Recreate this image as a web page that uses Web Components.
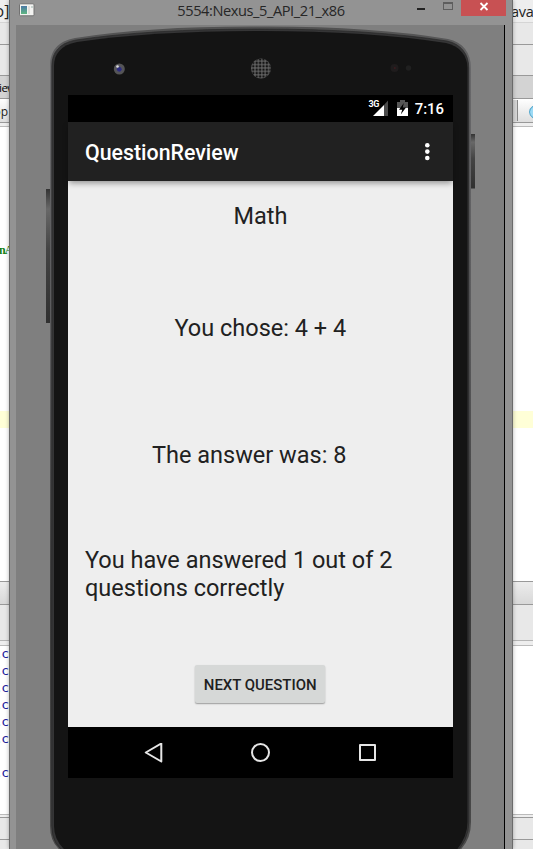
<!DOCTYPE html>
<html lang="en">
<head>
<meta charset="utf-8">
<title>5554:Nexus_5_API_21_x86</title>
<style>
html,body{margin:0;height:849px;overflow:hidden}
body{position:relative;font-family:Roboto,"Liberation Sans",sans-serif;background:#fff}
</style>
</head>
<body>
<desktop-scene></desktop-scene>
<script>
const define = (name, html) => customElements.define(name, class extends HTMLElement {
  constructor() {
    super();
    this.attachShadow({mode: 'open'}).innerHTML = html;
  }
});

define('ide-strip', `
<style>
:host{display:flex;justify-content:flex-start;align-items:center;box-sizing:border-box;flex:none;overflow:hidden;white-space:pre;
 width:533px;height:var(--h);background:var(--bg,#fff);border-bottom:var(--line,0 solid #999);color:#222;font:var(--f,16px "Open Sans",sans-serif)}
.l{width:10px;flex:none;display:flex}
.r{margin-left:503px;width:20px;flex:none;display:flex}
</style>
<div class="l"><slot></slot></div><div class="r"><slot name="right"></slot></div>`);

define('ide-backdrop', `
<style>
:host{display:flex;flex-direction:column;width:533px;height:849px;overflow:hidden}
.code span{color:#128012;margin:-2px 0 0 -1px;font:bold 12px/17px "Liberation Serif",serif;letter-spacing:-.8px}
.log{--h:17px;--f:13px/14px "DejaVu Sans Mono","Liberation Mono",monospace}
.log span{color:#20209a;margin:-2px 0 0 -5px;letter-spacing:-1.500px}
.stub{display:block;flex:none;width:4px;height:21px;background:#d6d6d6;border-right:1px solid #888}
.disc{display:block;flex:none;width:20px;height:14px;border-radius:50%;background:#9cdaf5;border:1px solid #54a7cc;margin:4px 0 0 11px}
</style>
<ide-strip style="--h:23px;--bg:#eee;--line:1px solid #d5d5d5"><span style="margin-left:-5.500px">o]</span><span slot="right" style="font-size:14.5px;margin-left:-2px;letter-spacing:-.3px">ava</span></ide-strip>
<ide-strip style="--h:22px;--bg:#e8e8e8;--line:1px solid #999"></ide-strip>
<ide-strip style="--h:31px;--bg:#e8e8e8;--line:1px solid #999"></ide-strip>
<ide-strip style="--h:23px;--bg:#d3d3d3;--line:1px solid #999;--f:11.5px 'Open Sans',sans-serif"><span style="color:#000;margin-left:-1px;letter-spacing:-.5px">iew</span></ide-strip>
<ide-strip style="--h:24px;--bg:linear-gradient(#fff,#dedede);--line:1px solid #999;--f:12px 'Open Sans',sans-serif"><span style="margin:1px 0 0 -6.500px">op</span><i slot="right" class="stub"></i><i slot="right" class="disc"></i></ide-strip>
<ide-strip style="--h:4px;--bg:#eee;--line:1px solid #bbb"></ide-strip>
<ide-strip style="--h:115px"></ide-strip>
<ide-strip class="code" style="--h:18px"><span>nA</span></ide-strip>
<ide-strip style="--h:151px"></ide-strip>
<ide-strip style="--h:17px;--bg:#ffffd7"></ide-strip>
<ide-strip style="--h:154px;--line:1px solid #999"></ide-strip>
<ide-strip style="--h:23px;--bg:linear-gradient(#ececec,#d8d8d8);--line:1px solid #999"></ide-strip>
<ide-strip style="--h:36px;--bg:#e8e8e8;--line:1px solid #b5b5b5"></ide-strip>
<ide-strip style="--h:5px;--bg:#eee;--line:1px solid #bbb"></ide-strip>
<ide-strip class="log"><span>.c</span></ide-strip>
<ide-strip class="log"><span>.c</span></ide-strip>
<ide-strip class="log"><span>.c</span></ide-strip>
<ide-strip class="log"><span>.c</span></ide-strip>
<ide-strip class="log"><span>.c</span></ide-strip>
<ide-strip class="log"><span>.c</span></ide-strip>
<ide-strip class="log"></ide-strip>
<ide-strip class="log"><span>.c</span></ide-strip>
<ide-strip style="--h:33px;--line:1px solid #bbb"></ide-strip>
<ide-strip style="--h:3px;--bg:#eee;--line:1px solid #999"></ide-strip>
<ide-strip style="--h:22px;--bg:#e8e8e8;--line:1px solid #999"></ide-strip>
<ide-strip style="--h:10px;--bg:#e8e8e8"></ide-strip>`);

define('title-bar', `
<style>
:host{display:flex;height:25px;background:#939393;align-items:flex-start}
.ico{width:16px;height:14px;margin:3px 0 0 9px}
.t{flex:1;text-align:center;font:14.6px/20px "Open Sans",sans-serif;letter-spacing:-.42px;color:#262626;white-space:nowrap;padding-left:89px}
svg{display:block;flex:none}
.close{width:45px;height:16px;background:#c85153;margin-right:6px}
</style>
<svg class="ico" viewBox="0 0 16 14"><defs><linearGradient id="g" x2="0" y2="1"><stop stop-color="#4a78a6"/><stop offset="1" stop-color="#5fb681"/></linearGradient></defs><rect x=".5" y=".8" width="14.5" height="12" rx="1" fill="#f3f3f1" stroke="#727272"/><path d="M2 3h6v8H2z" fill="url(#g)"/><path d="M9 3h2v8H9z" fill="#dededb"/><path d="M12 3h2v2h-2z" fill="#c7d3cf"/></svg>
<div class="t"><slot></slot></div>
<svg width="45" height="20" style="margin:0 3px 0 15px"><path d="M4 9h8" stroke="#222" stroke-width="2"/><rect x="30.500" y="3" width="9" height="6.500" fill="none" stroke="#5e5e5e"/><path d="M30 3h10" stroke="#5e5e5e" stroke-width="2"/></svg>
<svg class="close" viewBox="0 0 45 16"><path d="M19.500 3l7 7M26.500 3l-7 7" stroke="#fff" stroke-width="1.800"/></svg>`);

define('status-bar', `
<style>
:host{display:flex;height:27px;background:#000;color:#fff;justify-content:flex-end;align-items:center;box-sizing:border-box;padding-right:9px;font:500 14.9px/27px Roboto,sans-serif}
.c{padding-top:2px}
svg{display:block}
.g{font:bold 9px/8px Roboto,sans-serif;align-self:flex-start;padding-top:5px;letter-spacing:-.6px}
</style>
<span class="g">3G</span>
<svg width="15" height="27" style="margin-left:-6px"><path d="M11 10L15 5.500V21h-4z" fill="#4b4b4b"/><path d="M0 21L11 10v11z" fill="#fff"/></svg>
<svg width="11" height="27" style="margin:0 7px 0 9px"><path d="M3 5h5v2h3v14H0V7h3z" fill="#555"/><path d="M0 13h11v8H0z" fill="#fff"/><path d="M6.800 8L2 14.700h3.200L3.800 19.500 9 12.500H5.800z" fill="#000"/></svg>
<span class="c">7:16</span>`);

define('app-bar', `
<style>
:host{display:flex;height:59px;background:#212121;color:#fff;justify-content:space-between;align-items:center;box-sizing:border-box;padding:0 23px 0 17px;font:500 21.35px/30px Roboto,sans-serif;position:relative;z-index:1;box-shadow:0 3px 6px -1px rgba(0,0,0,.4)}
svg{display:block}span{padding-top:3px}
</style>
<span><slot></slot></span>
<svg width="6" height="20" fill="#fff"><circle cx="3.300" cy="3.200" r="2.300"/><circle cx="3.300" cy="9.600" r="2.300"/><circle cx="3.300" cy="16" r="2.300"/></svg>`);

define('material-button', `
<style>
:host{display:block}
button{display:block;width:130px;height:38px;border:0;padding:2px 0 0;border-radius:2px;background:#d6d8d7;color:#202020;font:500 14.95px/36px Roboto,sans-serif;white-space:nowrap;box-shadow:0 1px 1.500px rgba(0,0,0,.35)}
</style><button><slot></slot></button>`);

define('review-content', `
<style>
:host{display:flex;flex-direction:column;height:546px;box-sizing:border-box;background:#eee;color:#212121;padding:22px 17px 0;font:23.5px/27.5px Roboto,sans-serif;white-space:nowrap;overflow:hidden}
p{margin:0}
</style>
<p style="padding-left:148.500px">Math</p>
<p style="padding-left:89.500px;margin-top:84.500px">You chose: 4 + 4</p>
<p style="padding-left:67px;margin-top:99px">The answer was: 8</p>
<p style="margin-top:76.500px;line-height:28px">You have answered 1 out of 2<br>questions correctly</p>
<material-button style="margin:63px 0 0 110.200px">NEXT QUESTION</material-button>`);

define('nav-bar', `
<style>:host{display:flex;height:51px;background:#000;align-items:center;justify-content:space-between;padding:0 76px}svg{display:block;fill:none;stroke:#e6e6e6;stroke-width:2;stroke-linejoin:round}</style>
<svg width="19" height="20"><path d="M17.300 .5L1.800 9.500l15.500 9z"/></svg>
<svg width="20" height="20"><circle cx="9.500" cy="9.500" r="8.500"/></svg>
<svg width="19" height="20"><rect x="2" y="2" width="15" height="15"/></svg>`);

define('phone-shell', `
<style>
:host{display:block;position:relative;width:488px;height:824px;background:#7f7f7f;overflow:hidden}
.body{position:absolute;inset:0;display:block}
.screen{position:relative;display:flex;flex-direction:column;width:385px;margin:70px 0 0 52px}
</style>
<svg class="body" width="488" height="824" viewBox="16 25 488 824">
<defs>
<linearGradient id="key" x2="0" y2="1"><stop stop-color="#333"/><stop offset=".15" stop-color="#686868"/><stop offset=".45" stop-color="#444"/><stop offset="1" stop-color="#303030"/></linearGradient>
<linearGradient id="rim" x2="0" y2="1"><stop stop-color="#505050"/><stop offset=".05" stop-color="#68686a"/><stop offset=".35" stop-color="#5c5c5e"/><stop offset=".7" stop-color="#3c3c3c"/><stop offset="1" stop-color="#4a4a4a"/></linearGradient>
<pattern id="mesh" width="3.400" height="3.400" patternUnits="userSpaceOnUse"><circle cx="1.700" cy="1.700" r="1.250" fill="#151515"/></pattern>
</defs>
<rect x="46" y="189" width="5" height="134" fill="url(#key)"/>
<rect x="470" y="134" width="5" height="54.500" fill="url(#key)"/>
<path d="M50 66C50 51 58 41 75 38Q150 26 260 26.500Q370 26 448 39C463 42 471 53 471 68V822Q471 842 456 854H66Q50 846 50 826Z" fill="url(#rim)"/>
<path d="M51.800 66C51.800 52 60 43 76 40Q150 29 260 29Q370 29 447 41C461 44 468.800 54 468.800 68V822Q468.800 841 454 854H68Q51.800 846 51.800 826Z" fill="#353536" stroke="#242424" stroke-width=".6"/>
<path d="M54 66C54 54 61 45 77 42Q150 31 260 31Q370 31 446 43C460 46 467.500 56 467.500 68V822Q467.500 839 453 854H70Q54 843 54 826Z" fill="#141414"/>
<circle cx="119.300" cy="69" r="5.500" fill="#555"/><circle cx="118.800" cy="68.800" r="4" fill="#55555c"/><circle cx="119.300" cy="69.300" r="2.400" fill="#2c2c80"/><circle cx="117.500" cy="66.500" r="1.300" fill="#ddd"/>
<circle cx="261" cy="68.500" r="10" fill="#606060"/><circle cx="261" cy="68.500" r="10" fill="url(#mesh)"/>
<circle cx="394.500" cy="68" r="4" fill="#1f1c1d"/><circle cx="394.800" cy="68" r="1" fill="#3a1c1f"/><circle cx="408.500" cy="68" r="2.700" fill="#202020"/>
</svg>
<div class="screen"><status-bar></status-bar><app-bar>QuestionReview</app-bar><review-content></review-content><nav-bar></nav-bar></div>`);

define('emulator-window', `
<style>
:host{display:block;box-sizing:border-box;width:504px;height:849px;background:#939393;border:solid #6b6b6b;border-width:0 1px;overflow:hidden;box-shadow:0 0 4px rgba(0,0,0,.3)}
.client{display:block;width:488px;margin-left:6px;border-right:1px solid #000}
</style>
<title-bar>5554:Nexus_5_API_21_x86</title-bar>
<div class="client"><phone-shell></phone-shell></div>`);

define('desktop-scene', `
<style>
:host{display:block;position:relative;width:533px;height:849px;overflow:hidden}
emulator-window{position:absolute;left:9px;top:0}
</style>
<ide-backdrop></ide-backdrop><emulator-window></emulator-window>`);
</script>
</body>
</html>
